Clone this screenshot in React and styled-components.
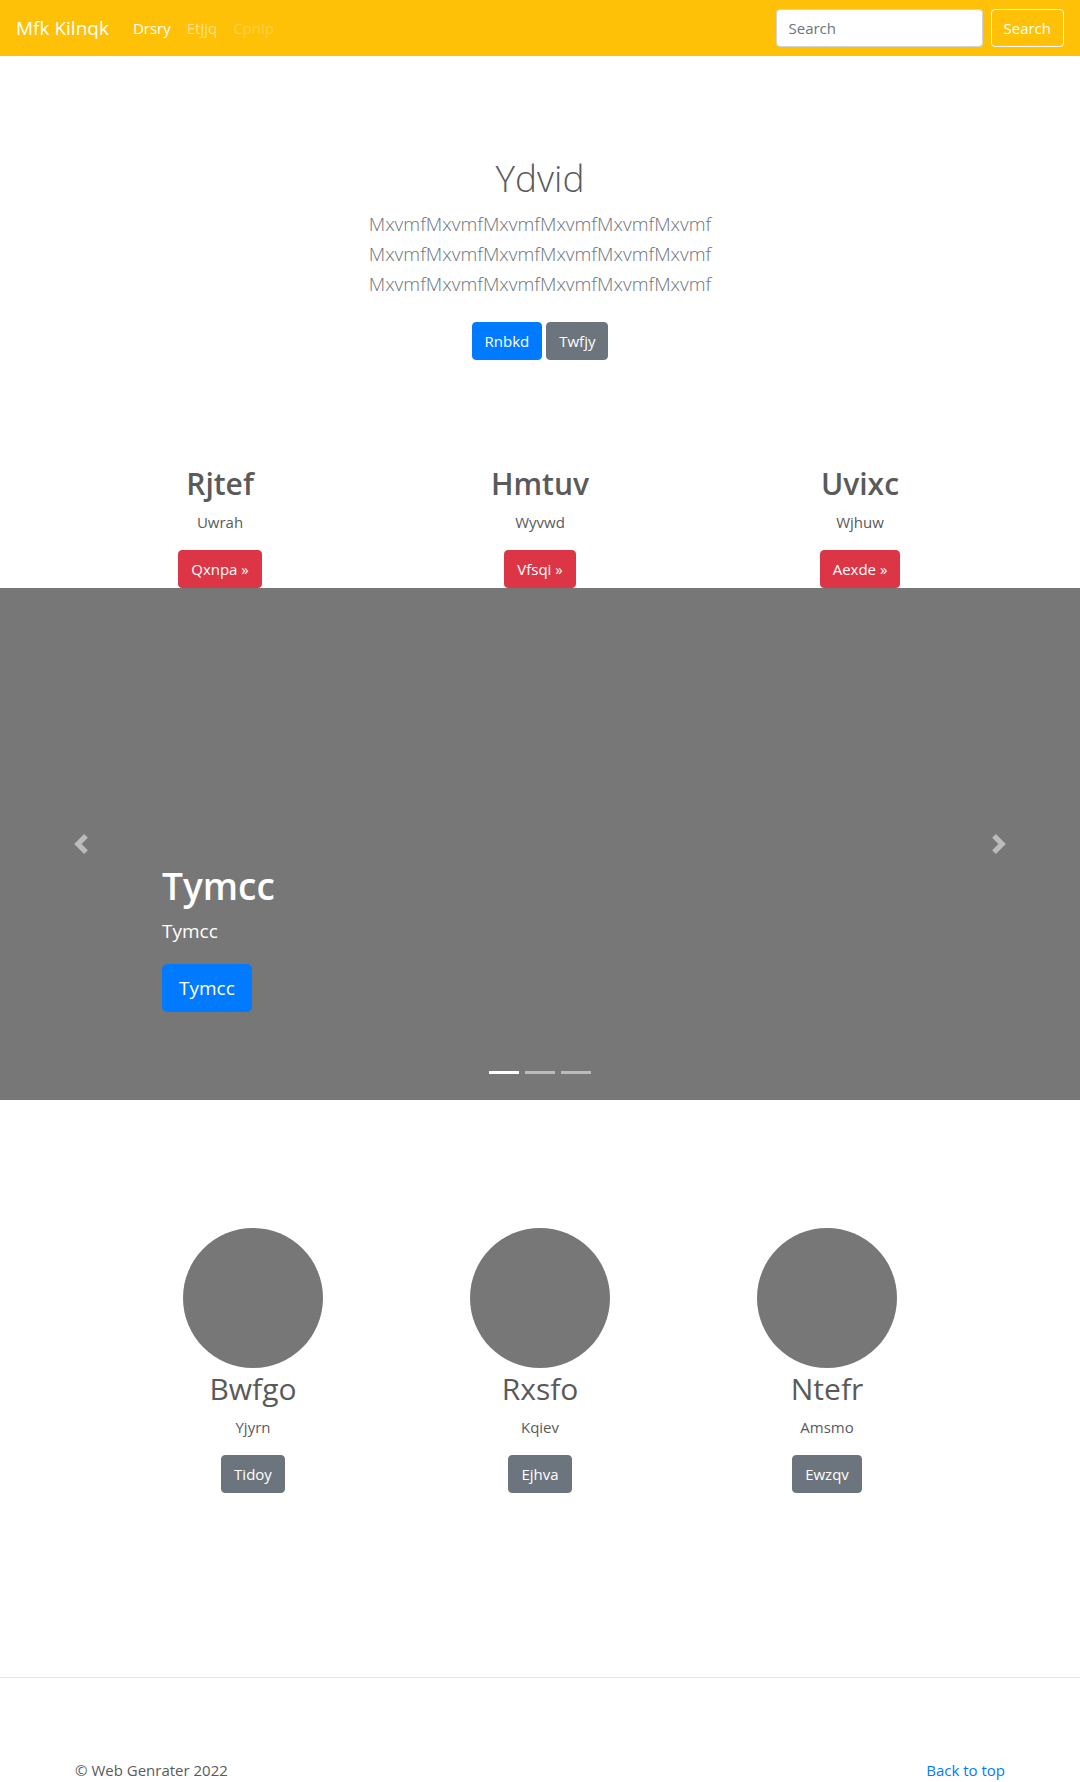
import React, { useState } from "react";
import styled, { createGlobalStyle } from "styled-components";

const GlobalStyle = createGlobalStyle`
  *, *::before, *::after { box-sizing: border-box; }
  body {
    margin: 0;
    background: #fff;
    color: #5a5a5a;
    font-family: "Open Sans", "Noto Sans", sans-serif;
    font-size: 15px;
    line-height: 24px;
  }
  h1, h2, p, ul { margin: 0; padding: 0; }
  button, input { font: inherit; }
`;

const Navbar = styled.header`
  display: flex;
  align-items: center;
  height: 56px;
  padding: 0 16px;
  background: #ffc107;
`;

const Brand = styled.a`
  margin-right: 16px;
  color: #fff;
  font-size: 19px;
  line-height: 30px;
  text-decoration: none;
`;

const NavList = styled.ul`
  display: flex;
  flex: 1;
  list-style: none;
`;

const NavLink = styled.a`
  display: block;
  padding: 8px;
  color: rgba(255, 255, 255, ${(p) => p.$opacity});
  text-decoration: none;
`;

const SearchForm = styled.form`
  display: flex;
  gap: 8px;
`;

const SearchInput = styled.input`
  width: 207px;
  height: 38px;
  padding: 6px 12px;
  border: 1px solid #ced4da;
  border-radius: 4px;
  background: #fff;
  color: #495057;
  &::placeholder { color: #6c757d; opacity: 1; }
`;

const colors = {
  primary: "#007bff",
  secondary: "#6c757d",
  danger: "#dc3545",
};

const Button = styled.button`
  padding: ${(p) => (p.$large ? "8px 16px" : "6px 12px")};
  border: 1px solid ${(p) => colors[p.$color] || "#f8f9fa"};
  border-radius: ${(p) => (p.$large ? 5 : 4)}px;
  background: ${(p) => colors[p.$color] || "transparent"};
  color: #fff;
  font-size: ${(p) => (p.$large ? 19 : 15)}px;
  line-height: ${(p) => (p.$large ? 30 : 24)}px;
  cursor: pointer;
`;

const Hero = styled.section`
  padding: 96px 16px 95px;
  text-align: center;
`;

const HeroTitle = styled.h1`
  margin-bottom: 6px;
  font-size: 37px;
  font-weight: 300;
  line-height: 51px;
`;

const Lead = styled.p`
  margin-bottom: 23px;
  color: #6c757d;
  font-size: 19px;
  font-weight: 300;
  line-height: 30px;
`;

const ButtonRow = styled.div`
  display: flex;
  justify-content: center;
  gap: 4px;
  margin-bottom: 8px;
`;

const Columns = styled.section`
  display: grid;
  grid-template-columns: repeat(3, 1fr);
  max-width: ${(p) => p.$max}px;
  margin: 0 auto;
`;

const Column = styled.div`
  display: flex;
  flex-direction: column;
  align-items: center;
`;

const ColumnTitle = styled.h2`
  margin-bottom: 5px;
  font-size: 30px;
  font-weight: ${(p) => p.$weight};
  line-height: 42px;
`;

const ColumnText = styled.p`
  margin-bottom: 16px;
`;

const Circle = styled.div`
  width: 140px;
  height: 140px;
  border-radius: 50%;
  background: #777;
`;

const Carousel = styled.section`
  display: grid;
  grid-template-columns: 15% 1fr 15%;
  height: 512px;
  background: #777;
`;

const CarouselControl = styled.button`
  display: flex;
  align-items: center;
  justify-content: center;
  padding: 0;
  border: 0;
  background: none;
  color: #fff;
  opacity: 0.5;
  cursor: pointer;
`;

const Slide = styled.div`
  display: flex;
  flex-direction: column;
  justify-content: flex-end;
  align-items: flex-start;
  color: #fff;
`;

const SlideTitle = styled.h1`
  margin-bottom: 6px;
  font-size: 37px;
  font-weight: 600;
  line-height: 48px;
`;

const SlideText = styled.p`
  margin-bottom: 18px;
  font-size: 19px;
  line-height: 30px;
`;

const Indicators = styled.div`
  display: flex;
  align-self: center;
  gap: 6px;
  padding: 59px 0 26px;
`;

const Indicator = styled.button`
  width: 30px;
  height: 3px;
  padding: 0;
  border: 0;
  background: #fff;
  opacity: ${(p) => (p.$active ? 1 : 0.5)};
  cursor: pointer;
`;

const Marketing = styled.div`
  padding: 128px 16px 184px;
`;

const Divider = styled.hr`
  margin: 0;
  border: 0;
  border-top: 1px solid rgba(0, 0, 0, 0.1);
`;

const Footer = styled.footer`
  display: flex;
  justify-content: space-between;
  max-width: 960px;
  margin: 0 auto;
  padding: 80px 15px 0;
`;

const TopLink = styled.a`
  color: #007bff;
  text-decoration: none;
`;

const navItems = [
  { label: "Drsry", opacity: 1 },
  { label: "Etjjq", opacity: 0.5 },
  { label: "Cpnip", opacity: 0.25 },
];

const features = [
  { title: "Rjtef", text: "Uwrah", action: "Qxnpa »" },
  { title: "Hmtuv", text: "Wyvwd", action: "Vfsqi »" },
  { title: "Uvixc", text: "Wjhuw", action: "Aexde »" },
];

const people = [
  { title: "Bwfgo", text: "Yjyrn", action: "Tidoy" },
  { title: "Rxsfo", text: "Kqiev", action: "Ejhva" },
  { title: "Ntefr", text: "Amsmo", action: "Ewzqv" },
];

const leadLine = "MxvmfMxvmfMxvmfMxvmfMxvmfMxvmf";

function Chevron({ d }) {
  return (
    <svg width="20" height="20" viewBox="0 0 8 8" fill="currentColor" aria-hidden="true">
      <path d={d} />
    </svg>
  );
}

export default function App() {
  const [slide, setSlide] = useState(0);

  return (
    <>
      <GlobalStyle />
      <Navbar id="top">
        <Brand href="#top">Mfk Kilnqk</Brand>
        <NavList>
          {navItems.map((item) => (
            <li key={item.label}>
              <NavLink href="#top" $opacity={item.opacity}>{item.label}</NavLink>
            </li>
          ))}
        </NavList>
        <SearchForm onSubmit={(e) => e.preventDefault()}>
          <SearchInput type="search" placeholder="Search" aria-label="Search" />
          <Button type="submit">Search</Button>
        </SearchForm>
      </Navbar>

      <main>
        <Hero>
          <HeroTitle>Ydvid</HeroTitle>
          <Lead>
            {leadLine}<br />
            {leadLine}<br />
            {leadLine}
          </Lead>
          <ButtonRow>
            <Button type="button" $color="primary">Rnbkd</Button>
            <Button type="button" $color="secondary">Twfjy</Button>
          </ButtonRow>
        </Hero>

        <Columns $max={960}>
          {features.map((f) => (
            <Column key={f.title}>
              <ColumnTitle $weight={600}>{f.title}</ColumnTitle>
              <ColumnText>{f.text}</ColumnText>
              <Button type="button" $color="danger">{f.action}</Button>
            </Column>
          ))}
        </Columns>

        <Carousel>
          <CarouselControl type="button" aria-label="Previous" onClick={() => setSlide((slide + 2) % 3)}>
            <Chevron d="M5.25 0l-4 4 4 4 1.5-1.5L4.25 4l2.5-2.5L5.25 0z" />
          </CarouselControl>
          <Slide>
            <SlideTitle>Tymcc</SlideTitle>
            <SlideText>Tymcc</SlideText>
            <Button type="button" $color="primary" $large>Tymcc</Button>
            <Indicators>
              {[0, 1, 2].map((i) => (
                <Indicator
                  key={i}
                  type="button"
                  aria-label={`Slide ${i + 1}`}
                  $active={i === slide}
                  onClick={() => setSlide(i)}
                />
              ))}
            </Indicators>
          </Slide>
          <CarouselControl type="button" aria-label="Next" onClick={() => setSlide((slide + 1) % 3)}>
            <Chevron d="M2.75 0l-1.5 1.5L3.75 4l-2.5 2.5L2.75 8l4-4-4-4z" />
          </CarouselControl>
        </Carousel>

        <Marketing>
          <Columns $max={861}>
            {people.map((p) => (
              <Column key={p.title}>
                <Circle />
                <ColumnTitle $weight={400}>{p.title}</ColumnTitle>
                <ColumnText>{p.text}</ColumnText>
                <Button type="button" $color="secondary">{p.action}</Button>
              </Column>
            ))}
          </Columns>
        </Marketing>
      </main>

      <Divider />
      <Footer>
        <p>© Web Genrater 2022</p>
        <TopLink href="#top">Back to top</TopLink>
      </Footer>
    </>
  );
}
